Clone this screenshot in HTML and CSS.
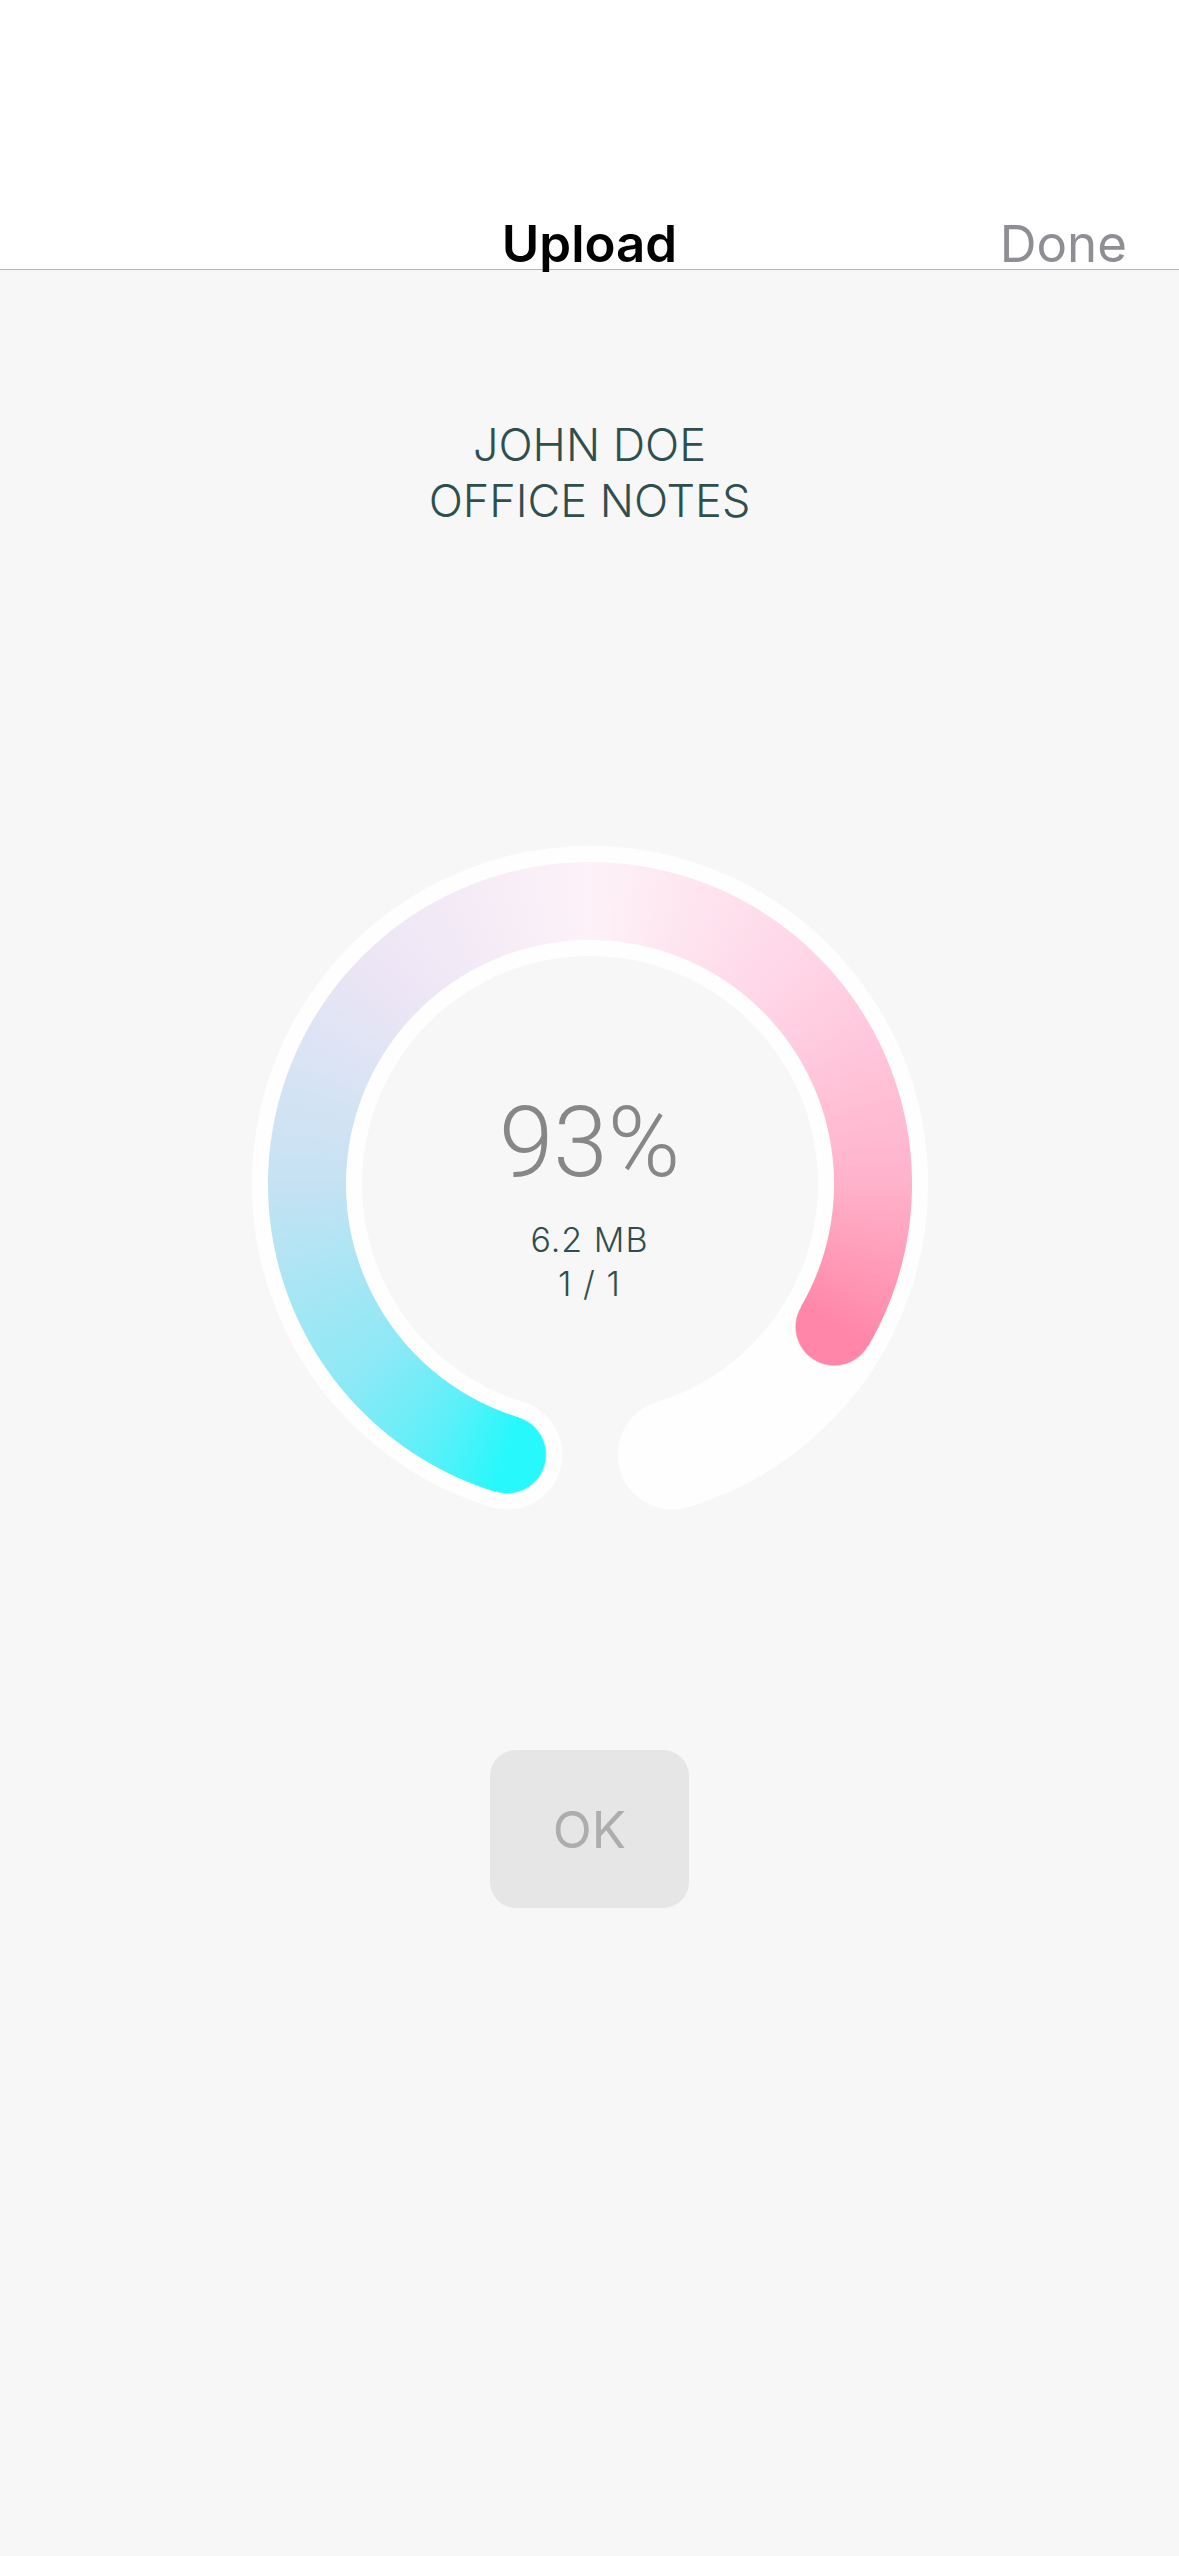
FILE: index.html
```html
<!DOCTYPE html>
<html lang="en">
<head>
<meta charset="utf-8">
<title>Upload</title>
<link rel="stylesheet" href="styles.css">
</head>
<body>
  <header class="nav">
    <div class="nav-title">Upload</div>
    <div class="nav-done">Done</div>
  </header>
  <main class="content">
    <div class="doc-title">JOHN DOE<br>OFFICE NOTES</div>
    <div class="ring">
      <svg class="track" width="680" height="680" viewBox="0 0 680 680">
        <path d="M 257.3 610.6 A 283 283 0 1 1 422.7 610.6" fill="none" stroke="#fefefe" stroke-width="110" stroke-linecap="round"/>
      </svg>
      <div class="arc"></div>
      <div class="readout">
        <div class="percent">93%</div>
        <div class="size">6.2 MB</div>
        <div class="count">1 / 1</div>
      </div>
    </div>
    <button class="ok">OK</button>
  </main>
</body>
</html>
```

FILE: styles.css
```css
* {
  box-sizing: border-box;
  margin: 0;
  padding: 0;
}

html, body {
  width: 1179px;
  min-height: 2556px;
}

body {
  background: #f7f7f7;
  font-family: Inter, "Noto Sans", sans-serif;
}

.nav {
  background: #ffffff;
  border-bottom: 1px solid #b4b4b4;
  height: 270px;
  display: grid;
  grid-template-columns: 1fr auto 1fr;
  align-items: end;
}

.nav-title {
  grid-column: 2;
  font-size: 51px;
  line-height: 50px;
  font-weight: 600;
  color: #000000;
}

.nav-done {
  grid-column: 3;
  justify-self: end;
  padding-right: 52px;
  font-size: 51px;
  line-height: 50px;
  font-weight: 400;
  color: #8e8e93;
}

.content {
  display: flex;
  flex-direction: column;
  align-items: center;
}

.doc-title {
  margin-top: 147px;
  text-align: center;
  font-size: 45px;
  line-height: 56px;
  font-weight: 300;
  color: #2f4f4f;
}

.ring {
  margin-top: 315px;
  width: 680px;
  height: 680px;
  display: grid;
}

.ring > * {
  grid-area: 1 / 1;
}

.track {
  display: block;
  width: 680px;
  height: 680px;
}

.arc {
  width: 680px;
  height: 680px;
  background:
    conic-gradient(from 197deg at 340px 340px,
      #27f8fb 0deg,
      #5cf0f9 14deg,
      #8ce9f6 33deg,
      #c5e2f3 73deg,
      #ece5f5 118deg,
      #fdf2f8 163deg,
      #ffd6e7 206deg,
      #ffb2cb 253deg,
      #ff86a8 283.3deg,
      rgba(255, 134, 168, 0) 283.3deg,
      rgba(255, 134, 168, 0) 360deg),
    radial-gradient(circle 39px at 257.3px 610.6px, #27f8fb 38px, rgba(39, 248, 251, 0) 39.5px),
    radial-gradient(circle 39px at 584.3px 482.8px, #ff86a8 38px, rgba(255, 134, 168, 0) 39.5px);
  -webkit-mask-image: radial-gradient(circle 340px at 340px 340px, transparent 243.5px, #000 244.5px, #000 321.5px, transparent 322.5px);
  mask-image: radial-gradient(circle 340px at 340px 340px, transparent 243.5px, #000 244.5px, #000 321.5px, transparent 322.5px);
}

.readout {
  padding-top: 250px;
  display: flex;
  flex-direction: column;
  align-items: center;
  text-align: center;
}

.percent {
  font-family: Roboto, Inter, sans-serif;
  font-size: 98px;
  line-height: 98px;
  font-weight: 300;
  color: #878787;
}

.size,
.count {
  font-size: 34px;
  line-height: 44px;
  font-weight: 300;
  letter-spacing: 0.03em;
  color: #2f4f4f;
}

.size {
  margin-top: 26px;
}

.ok {
  margin-top: 226px;
  width: 199px;
  height: 158px;
  border: none;
  border-radius: 26px;
  background: #e6e6e6;
  color: #adadad;
  font-family: Inter, "Noto Sans", sans-serif;
  font-size: 51px;
  font-weight: 400;
}
```
